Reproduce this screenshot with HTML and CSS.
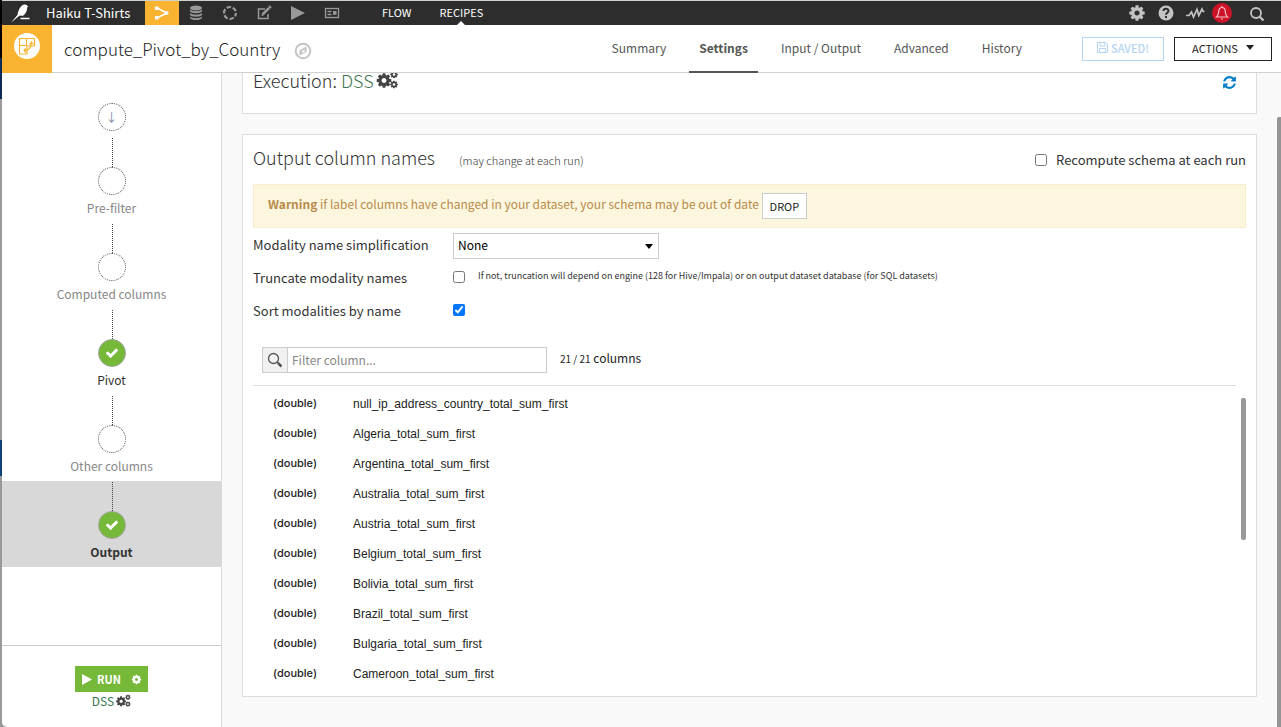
FILE: index.html
```html
<!DOCTYPE html>
<html lang="en">
<head>
<meta charset="utf-8">
<title>compute_Pivot_by_Country</title>
<link rel="stylesheet" href="styles.css">
</head>
<body>
<svg class="sprite" aria-hidden="true">
  <symbol id="cog" viewBox="0 0 1792 1792"><path d="M1152 896q0-106-75-181t-181-75-181 75-75 181 75 181 181 75 181-75 75-181zm512-109v222q0 12-8 23t-20 13l-185 28q-19 54-39 91 35 50 107 138 10 12 10 25t-9 23q-27 37-99 108t-94 71q-12 0-26-9l-138-108q-44 23-91 38-16 136-29 186-7 28-36 28h-222q-14 0-24.500-8.500t-11.500-21.500l-28-184q-49-16-90-37l-141 107q-10 9-25 9-14 0-25-11-126-114-165-168-7-10-7-23 0-12 8-23 15-21 51-66.500t54-70.500q-27-50-41-99l-183-27q-13-2-21-12.500t-8-23.500v-222q0-12 8-23t19-13l186-28q14-46 39-92-40-57-107-138-10-12-10-24 0-10 9-23 26-36 98.500-107.500t94.500-71.500q13 0 26 10l138 107q44-23 91-38 16-136 29-186 7-28 36-28h222q14 0 24.500 8.500t11.500 21.500l28 184q49 16 90 37l142-107q9-9 24-9 13 0 25 10 129 119 165 170 7 8 7 22 0 12-8 23-15 21-51 66.500t-54 70.500q26 50 41 98l183 28q13 2 21 12.500t8 23.500z"/></symbol>
  <symbol id="cogs" viewBox="0 0 22 20"><use href="#cog" x="-1" y="2" width="17" height="17"/><use href="#cog" x="13" y="0" width="9" height="9"/><use href="#cog" x="13" y="10" width="9" height="9"/></symbol>
  <symbol id="check" viewBox="0 0 1792 1792"><path d="M1671 566q0 40-28 68l-724 724-136 136q-28 28-68 28t-68-28l-136-136-362-362q-28-28-28-68t28-68l136-136q28-28 68-28t68 28l294 295 656-657q28-28 68-28t68 28l136 136q28 28 28 68z"/></symbol>
  <symbol id="play" viewBox="0 0 14 14"><path d="M0 0v14l14-7z"/></symbol>
</svg>
<div class="window">
  <header class="topbar">
    <a class="brand" href="#" aria-label="Home"><svg width="24" height="20" viewBox="0 0 24 20"><path d="M2 19.500 8.500 12C9.500 6 12 2 15.500 1.500c1.800-.2 2.600.6 2.800 1.500l1.200.8-1.400.6c.2 3-1 6.200-4.600 8.600l-2.500-.6-1.500 1z" fill="#fff"/><path d="M11.500 15.500h9" stroke="#fff" stroke-width="1.500"/></svg></a>
    <a class="project" href="#">Haiku T-Shirts</a>
    <nav class="tools" aria-label="Project">
      <a class="tool tool-active" href="#" aria-label="Flow"><svg width="16" height="16" viewBox="0 0 16 16" fill="#fff" stroke="#fff"><path d="M3 3l10 5-10 5" fill="none" stroke-width="1.500"/><rect x="1" y="1.500" width="3.500" height="3.500" stroke="none"/><circle cx="12.500" cy="8" r="2" stroke="none"/><rect x="1" y="11" width="3.500" height="3.500" stroke="none"/></svg></a>
      <a class="tool" href="#" aria-label="Datasets"><svg width="14" height="16" viewBox="0 0 14 16" fill="#999"><ellipse cx="7" cy="3" rx="6" ry="2.500"/><path d="M1 4.500c2 2.300 10 2.300 12 0v2c-2 2.300-10 2.300-12 0zM1 8c2 2.300 10 2.300 12 0v2c-2 2.300-10 2.300-12 0zM1 11.500c2 2.300 10 2.300 12 0V13c-2 2.800-10 2.800-12 0z"/></svg></a>
      <a class="tool" href="#" aria-label="Analyses"><svg width="16" height="16" viewBox="0 0 16 16"><circle cx="8" cy="8" r="6" fill="none" stroke="#999" stroke-width="2.200" stroke-dasharray="4.500 1.780" stroke-dashoffset="1"/></svg></a>
      <a class="tool" href="#" aria-label="Notebooks"><svg width="16" height="16" viewBox="0 0 16 16" fill="none" stroke="#999" stroke-width="1.500"><path d="M9 4H2.500v9.500H12V9"/><path d="M6.500 9.500 13 3" stroke-width="2.500"/><path d="M5.500 10.500l1.500-.4" /><path d="M13 1l2 2" stroke-width="2"/></svg></a>
      <a class="tool" href="#" aria-label="Jobs"><svg width="14" height="14" fill="#999"><use href="#play"/></svg></a>
      <a class="tool" href="#" aria-label="Dashboards"><svg width="16" height="12" viewBox="0 0 16 12" fill="none" stroke="#999" stroke-width="1.300"><rect x="1.500" y="1.500" width="13" height="9"/><path d="M3.500 4.500h4M3.500 7.500h4"/><path d="M9 4h3.500v3.800H9z" fill="#999" stroke="none"/></svg></a>
    </nav>
    <nav class="sections"><a href="#">FLOW</a><a class="section-active" href="#">RECIPES</a></nav>
    <div class="utilities">
      <button aria-label="Settings"><svg width="18" height="18" fill="#c3c3c3"><use href="#cog"/></svg></button>
      <button aria-label="Help"><svg width="16" height="16" viewBox="0 0 16 16"><circle cx="8" cy="8" r="7.500" fill="#c3c3c3"/><path d="M5.500 6c.2-3 5-3 5-.2C10.500 7.700 8 7.700 8 9.700" fill="none" stroke="#2d2d2d" stroke-width="2"/><path d="M7 11h2v2H7z" fill="#2d2d2d"/></svg></button>
      <button aria-label="Activity"><svg width="20" height="14" viewBox="0 0 20 14"><path d="M1 9.500h3l2.500-3.500 2 5L12 3.500l1.800 6L17 3l1 2.500h1.500" fill="none" stroke="#c3c3c3" stroke-width="1.700"/></svg></button>
      <button class="alert-bell" aria-label="Notifications"><svg width="20" height="20" viewBox="0 0 20 20"><circle cx="10" cy="10" r="10" fill="#ce1228"/><path d="M4.500 14c2-1.500 2-3 2.300-6C7 5.500 8.500 4.500 10 4.500s3 1 3.200 3.500c.3 3 .3 4.500 2.300 6zM9 16h2M10 3v1.500" fill="none" stroke="#f1c4ca" stroke-width="1.200"/></svg></button>
      <button class="find" aria-label="Search"><svg width="16" height="16" viewBox="0 0 16 16" fill="none" stroke="#c3c3c3"><circle cx="7" cy="8" r="5" stroke-width="1.800"/><path d="M10.500 11.500l4 4" stroke-width="2.300"/></svg></button>
    </div>
  </header>
  <div class="recipe-header">
    <div class="recipe-icon"><svg width="26" height="26" viewBox="0 0 26 26"><circle cx="13" cy="13" r="13" fill="#fff"/><g fill="none" stroke="#f9b330" stroke-width="1.200"><path d="M5.500 5.500h15V13H13v8H5.500zM5.500 12.500H13M12.500 5.500V13"/><path d="M10.500 17.500c4 0 6.500-2 7-7.500M15.500 11.500l2-2.500 2 2.500M12 15.500l-2 2 2 2"/></g></svg></div>
    <h1 class="recipe-name">compute_Pivot_by_Country</h1>
    <button class="compass" aria-label="Navigate"><svg width="18" height="18" viewBox="0 0 18 18"><circle cx="9" cy="9" r="7.300" fill="none" stroke="#c4c4c4" stroke-width="2"/><path d="M12.500 4.500v5.300l-7 4V8.300z" fill="#c4c4c4"/><path d="M10.700 7.500v2L8 11V9z" fill="#fff"/></svg></button>
    <nav class="tabs"><a href="#">Summary</a><a class="tab-active" href="#">Settings</a><a href="#">Input / Output</a><a href="#">Advanced</a><a href="#">History</a></nav>
    <button class="btn btn-saved"><svg width="11" height="11" viewBox="0 0 11 11" fill="none" stroke="#b3d4f5"><path d="M.5.500h8l2 2v8H.5zM3 .500V4h5V.500M2.500 10.500V6.500h6v4"/></svg>SAVED!</button>
    <button class="btn btn-actions">ACTIONS<span class="caret"></span></button>
  </div>
  <div class="body">
    <aside class="sidebar">
      <div class="start"><span class="node">↓</span></div>
      <nav class="steps">
        <a class="step" href="#"><span class="node"></span>Pre-filter</a>
        <a class="step" href="#"><span class="node"></span>Computed columns</a>
        <a class="step step-set" href="#"><span class="node"><svg width="14" height="14" fill="#fff"><use href="#check"/></svg></span>Pivot</a>
        <a class="step" href="#"><span class="node"></span>Other columns</a>
        <a class="step step-set step-current" href="#"><span class="node"><svg width="14" height="14" fill="#fff"><use href="#check"/></svg></span>Output</a>
      </nav>
      <div class="run-area">
        <div class="run"><button class="run-main"><svg width="10" height="11" viewBox="0 0 14 14" preserveAspectRatio="none" fill="#fff"><path d="M0 0v14l14-7z"/></svg>RUN</button><button class="run-options" aria-label="Run options"><svg width="11" height="11" fill="#fff"><use href="#cog"/></svg></button></div>
        <a class="engine" href="#">DSS<svg width="15" height="14" fill="#444"><use href="#cogs"/></svg></a>
      </div>
    </aside>
    <main class="content">
      <section class="card execution">
        <h2 class="card-title">Execution: <a href="#">DSS</a><svg width="23" height="20" fill="#444"><use href="#cogs"/></svg></h2>
        <button class="refresh" aria-label="Refresh"><svg width="15" height="15" viewBox="0 0 1792 1792" fill="#0a7fc9"><path d="M1639 1056q0 5-1 7-64 268-268 434.500t-478 166.500q-146 0-282.500-55t-243.500-157l-129 129q-19 19-45 19t-45-19-19-45v-448q0-26 19-45t45-19h448q26 0 45 19t19 45-19 45l-137 137q71 66 161 102t187 36q134 0 250-65t186-179q11-17 53-117 8-23 30-23h192q13 0 22.500 9.500t9.500 22.500zm25-800v448q0 26-19 45t-45 19h-448q-26 0-45-19t-19-45 19-45l138-138q-148-137-349-137-134 0-250 65t-186 179q-11 17-53 117-8 23-30 23h-199q-13 0-22.500-9.500t-9.500-22.500v-7q65-268 270-434.500t480-166.500q146 0 284 55.500t245 156.500l130-129q19-19 45-19t45 19 19 45z"/></svg></button>
      </section>
      <section class="card output">
        <div class="card-head">
          <h2 class="card-title">Output column names</h2>
          <span class="card-note">(may change at each run)</span>
          <label class="recompute"><input type="checkbox">Recompute schema at each run</label>
        </div>
        <div class="warning"><span><b>Warning</b> if label columns have changed in your dataset, your schema may be out of date</span><button class="btn-drop">DROP</button></div>
        <div class="field"><label for="simplify">Modality name simplification</label><span class="select"><select id="simplify"><option>None</option></select></span></div>
        <div class="field"><label for="truncate">Truncate modality names</label><input id="truncate" type="checkbox"><span class="hint">If not, truncation will depend on engine (128 for Hive/Impala) or on output dataset database (for SQL datasets)</span></div>
        <div class="field"><label for="sort">Sort modalities by name</label><input id="sort" type="checkbox" checked></div>
        <div class="filter">
          <label class="filter-icon" for="filter" aria-label="Filter"><svg width="16" height="16" viewBox="0 0 16 16" fill="none" stroke="#555"><circle cx="6.500" cy="6.500" r="5" stroke-width="1.300"/><path d="M10 10l1.500 1.500" stroke-width="1.300"/><path d="M11 11l3.500 3.500" stroke-width="2.500"/></svg></label><input id="filter" type="text" placeholder="Filter column...">
          <span class="count"><small>21 / 21</small> columns</span>
        </div>
        <div class="list">
          <table class="columns">
            <tr><td>(double)</td><td>null_ip_address_country_total_sum_first</td></tr>
            <tr><td>(double)</td><td>Algeria_total_sum_first</td></tr>
            <tr><td>(double)</td><td>Argentina_total_sum_first</td></tr>
            <tr><td>(double)</td><td>Australia_total_sum_first</td></tr>
            <tr><td>(double)</td><td>Austria_total_sum_first</td></tr>
            <tr><td>(double)</td><td>Belgium_total_sum_first</td></tr>
            <tr><td>(double)</td><td>Bolivia_total_sum_first</td></tr>
            <tr><td>(double)</td><td>Brazil_total_sum_first</td></tr>
            <tr><td>(double)</td><td>Bulgaria_total_sum_first</td></tr>
            <tr><td>(double)</td><td>Cameroon_total_sum_first</td></tr>
          </table>
          <div class="list-thumb"></div>
        </div>
      </section>
    </main>
    <div class="page-track"><div class="page-thumb"></div></div>
  </div>
</div>
</body>
</html>
```

FILE: styles.css
```css
* { box-sizing: border-box; }
body {
  margin: 0;
  font: 13px/20px "Noto Sans CJK SC", "Open Sans", sans-serif;
  color: #333;
  background: linear-gradient(#000 0 58px, #0b2a55 58px 99px, #999 99px 440px, #0f4279 440px 476px, #999 476px);
}
a { color: inherit; text-decoration: none; }
button { margin: 0; padding: 0; border: 0; background: none; font: inherit; color: inherit; }
svg { display: block; flex: none; }
h1, h2 { margin: 0; font-weight: 300; }
input[type="checkbox"] { width: 12px; height: 12px; margin: 0; }
.sprite { display: none; }
.window {
  display: flex;
  flex-direction: column;
  height: 100vh;
  min-height: 700px;
  margin-left: 2px;
  border-top: 1px solid #cdd2cd;
  border-bottom-left-radius: 5px;
  background: #fff;
  overflow: hidden;
}

.topbar { display: flex; align-items: stretch; height: 24px; flex: none; background: #2d2d2d; color: #fff; }
.brand { display: flex; align-items: center; width: 44px; padding-left: 7px; }
.project { width: 99px; font-size: 13px; line-height: 24px; white-space: nowrap; }
.tools { display: flex; }
.tool { display: flex; align-items: center; justify-content: center; width: 34px; }
.tool-active { background: #f9b330; }
.sections { display: flex; gap: 28px; margin-left: 33px; font-size: 11px; line-height: 22px; }
.section-active { position: relative; }
.section-active::after {
  content: "";
  position: absolute;
  left: 50%;
  bottom: 0;
  margin-left: -4px;
  border: 4px solid transparent;
  border-top: 0;
  border-bottom-color: #fff;
}
.utilities { display: flex; margin-left: auto; padding-right: 10px; }
.utilities button { display: flex; align-items: center; justify-content: center; width: 29px; }
.utilities .alert-bell { width: 26px; }
.utilities .find { width: 28px; margin-left: 8px; }

.recipe-header { position: relative; z-index: 1; display: flex; align-items: center; height: 48px; flex: none; border-bottom: 1px solid #d0d0d0; background: #fff; }
.recipe-icon { display: flex; justify-content: center; align-self: flex-start; width: 50px; height: 48px; padding-top: 8px; background: #f9b330; }
.recipe-name { margin-left: 12px; font-size: 17px; line-height: 28px; color: #222; }
.compass { margin: 4px 0 0 14px; }
.tabs { display: flex; gap: 13px; align-self: stretch; margin-left: auto; margin-right: 50px; color: #555; font-size: 12px; line-height: 45px; }
.tabs a { height: 48px; padding: 0 10px; white-space: nowrap; }
.tabs .tab-active { font-weight: 700; border-bottom: 2px solid #555; }
.btn { display: flex; align-items: center; justify-content: center; height: 24px; padding-bottom: 2px; border: 1px solid #222; font-size: 11px; line-height: 20px; color: #222; }
.btn-saved { gap: 3px; width: 82px; margin-right: 10px; border-color: #b3d4f5; color: #b3d4f5; font-weight: 500; }
.btn-actions { gap: 8px; width: 98px; margin-right: 9px; }
.caret { border: 4px solid transparent; border-top: 5px solid #222; border-bottom: 0; }

.body { display: flex; flex: 1; min-height: 0; }
.sidebar { display: flex; flex-direction: column; width: 220px; border-right: 1px solid #d8d8d8; color: #888; font-size: 12px; }
.start { padding-top: 30px; height: 64px; }
.node {
  display: flex;
  align-items: center;
  justify-content: center;
  width: 28px;
  height: 28px;
  margin: 0 auto;
  border: 1px dotted #555;
  border-radius: 50%;
  color: #7d8ba5;
}
.steps { flex: 1; }
.step { display: block; height: 86px; padding-top: 1px; text-align: center; line-height: 26px; }
.step::before { content: ""; display: block; width: 1px; height: 29px; margin-left: 110px; border-left: 1px dotted #444; }
.step-set { color: #333; }
.step-set .node { background: #76b939; border: 1px solid #a5a5a5; }
.step-current { background: #d8d8d8; font-weight: 700; }
.run-area { display: flex; flex-direction: column; align-items: center; height: 82px; padding-top: 20px; border-top: 1px solid #c8c8c8; }
.run { display: flex; height: 26px; background: #76b939; color: #fff; font-size: 11px; font-weight: 700; }
.run-main { display: flex; align-items: center; gap: 5px; width: 50px; padding-left: 7px; }
.run-options { display: flex; align-items: center; justify-content: center; width: 23px; }
.engine { display: flex; align-items: center; gap: 2px; line-height: 18px; color: #3c7550; }

.content { display: flex; flex-direction: column; gap: 20px; flex: 1; min-width: 0; padding: 0 20px 30px; background: #f9f9f9; }
.card { padding: 0 10px; border: 1px solid #ddd; background: #fff; }
.card-title { display: flex; align-items: center; font-size: 18px; line-height: 22px; color: #333; white-space: pre; }
.execution { display: flex; justify-content: space-between; height: 41px; flex: none; border-top: 0; }
.execution .card-title { height: 14px; }
.execution .card-title a { margin-right: 2px; color: #3c7550; }
.refresh { align-self: flex-start; margin: 2px 9px 0 0; }
.output { display: flex; flex-direction: column; flex: 1; min-height: 0; }
.card-head { display: flex; align-items: center; height: 49px; flex: none; }
.card-head .card-title { padding-bottom: 5px; }
.card-note { margin-left: 24px; font-size: 11px; font-weight: 300; }
.recompute { display: flex; align-items: center; gap: 9px; margin-left: auto; }
.warning { display: flex; align-items: center; gap: 3px; height: 44px; flex: none; padding: 0 14px; border: 1px solid #faebcc; background: #fcf6df; color: #b88b4a; font-size: 12px; }
.warning span { padding-bottom: 4px; }
.btn-drop { width: 45px; height: 26px; border: 1px solid #ccc; background: #fff; color: #222; font-size: 11px; }
.field { display: flex; align-items: center; height: 33px; flex: none; }
.warning + .field { margin-top: 1px; }
.field label { width: 200px; padding-bottom: 2px; }
.field input { margin-bottom: 4px; }
.select { position: relative; width: 206px; }
.select::after { content: ""; position: absolute; right: 6px; top: 11px; border: 4px solid transparent; border-top: 5px solid #000; border-bottom: 0; }
.select select { display: block; width: 100%; height: 26px; padding: 0 4px 2px; border: 1px solid #ccc; border-radius: 0; appearance: none; background: #fff; font: inherit; font-size: 12px; color: #000; }
.hint { margin-left: 13px; padding-bottom: 5px; font-size: 9px; }
.filter { display: flex; align-items: center; height: 26px; flex: none; margin: 19px 0 12px 9px; }
.filter-icon { display: flex; align-items: center; justify-content: center; width: 26px; height: 26px; border: 1px solid #ccc; background: #f1f1f1; }
.filter input { width: 259px; height: 26px; padding: 0 4px 2px; border: 1px solid #ccc; border-left: 0; font: inherit; font-size: 12px; }
.filter input::placeholder { color: #888; }
.count { margin-left: 13px; padding-bottom: 3px; font-size: 12px; color: #222; }
.count small { font-size: 10px; }
.list { position: relative; flex: 1; min-height: 0; margin-right: 10px; padding-top: 3px; border-top: 1px solid #ddd; }
.columns { border-collapse: collapse; font: 12px/30px "Liberation Sans", Arial, sans-serif; color: #222; }
.columns td { height: 30px; padding: 0; }
.columns td:first-child { width: 100px; padding-left: 20px; font: 500 11px/28px Inter, sans-serif; vertical-align: top; }
.list-thumb { position: absolute; right: -10px; top: 12px; width: 5px; height: 142px; border-radius: 2px; background: #999; }
.page-track { width: 4px; padding-top: 44px; background: #f9f9f9; }
.page-thumb { height: 100%; border-top-left-radius: 2px; background: #949494; }
```
